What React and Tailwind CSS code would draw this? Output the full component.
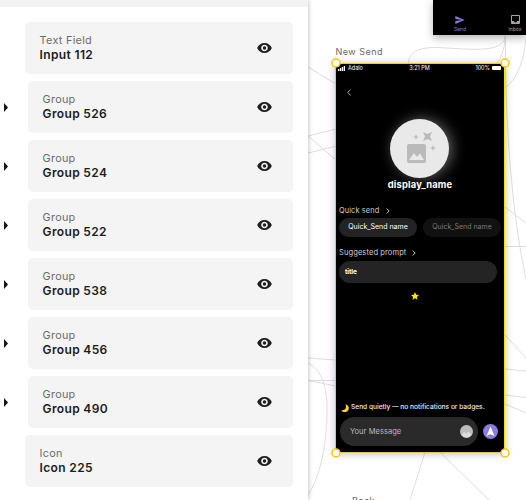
import React from "react";

const layers = [
  { kind: "Text Field", name: "Input 112" },
  { kind: "Group", name: "Group 526", group: true },
  { kind: "Group", name: "Group 524", group: true },
  { kind: "Group", name: "Group 522", group: true },
  { kind: "Group", name: "Group 538", group: true },
  { kind: "Group", name: "Group 456", group: true },
  { kind: "Group", name: "Group 490", group: true },
  { kind: "Icon", name: "Icon 225" },
];

function Eye() {
  return (
    <svg viewBox="1 4.5 22 15" className="h-[10px] w-[15px]" fill="#1f1f21">
      <path d="M12 4.5C7 4.5 2.73 7.61 1 12c1.73 4.39 6 7.5 11 7.5s9.27-3.11 11-7.5c-1.73-4.39-6-7.5-11-7.5zM12 17c-2.76 0-5-2.24-5-5s2.24-5 5-5 5 2.24 5 5-2.24 5-5 5zm0-7.6a2.6 2.6 0 1 0 0 5.2 2.6 2.6 0 0 0 0-5.2z" />
    </svg>
  );
}

function LayerRow({ layer }) {
  return (
    <div className="flex h-[52px] items-center">
      <div className={layer.group ? "w-[28px] pl-[4px]" : "w-[25px]"}>
        {layer.group && (
          <svg viewBox="0 0 4 9" className="h-[9px] w-[4px]" fill="#151515">
            <path d="M0 0L4 4.5L0 9z" />
          </svg>
        )}
      </div>
      <div className="flex h-full flex-1 items-center justify-between rounded-[5px] bg-[#f4f4f4] pr-[21px] pl-[15px]">
        <div className="-ml-[0.4px] flex flex-col whitespace-nowrap">
          <span className="text-[10.8px] leading-[14px] tracking-[0.3px] text-[#6b6b6b]">{layer.kind}</span>
          <span className="text-[12px] leading-[14px] font-semibold tracking-[0.35px] text-[#1c1c1e]">{layer.name}</span>
        </div>
        <Eye />
      </div>
    </div>
  );
}

function Connections() {
  return (
    <svg viewBox="0 0 526 500" className="absolute inset-0 h-[500px] w-[526px]" fill="none" stroke="#dedede" strokeWidth="1">
      <path d="M408.500 63C409 51 421 47 438 47.500C470 49 503 54 505.500 36V62C506 120 511 210 526 279" />
      <path d="M505 36C505 48 502 56 497 63M526 38C524 60 518 78 505 88" />
      <path d="M308 67L336 84M308 136L336 129M308 136L336 160M308 153L336 146" />
      <path d="M308 358L336 360M308 380.500H336M308 380.500L336 386M308 363C322 371 327 385 327 410C327 450 318 480 308 495" />
      <path d="M505 207L526 223M505 246.500H526M505 335L526 358M505 369L526 371M505 395L526 397.500M505 404L526 413" />
      <path d="M425 452L410 500M440 452L489 500" />
    </svg>
  );
}

function Chevron({ className }) {
  return (
    <svg viewBox="0 0 4 6" className={className} fill="none" stroke="#c9c9c9" strokeWidth="1">
      <path d="M.7.5L3.200 3L.7 5.500" />
    </svg>
  );
}

function Avatar() {
  return (
    <div className="mt-[23px] ml-[54px] h-[59px] w-[59px] rounded-full bg-[#e9e9e9] shadow-[3px_0_14px_rgba(255,255,255,0.38)]">
      <svg viewBox="0 0 59 59" className="h-full w-full" fill="#bababa">
        <rect x="17" y="25" width="19" height="19" rx="2" />
        <path d="M19 41L24 34L27 38L30 34.500L34 41z" fill="#e9e9e9" />
        <path d="M33 13L37.500 15L42 13L40 17.500L42 22L37.500 20L33 22L35 17.500z" />
        <path d="M26 15L26.800 17.200L29 18L26.800 18.800L26 21L25.200 18.800L23 18L25.200 17.200zM43 26L43.800 28.200L46 29L43.800 29.800L43 32L42.200 29.800L40 29L42.200 28.200z" />
      </svg>
    </div>
  );
}

function StatusBar() {
  return (
    <div className="flex h-[8px] items-center justify-between pr-[3px] pl-[2px] text-[5.5px] leading-[8px] text-white">
      <div className="flex w-[48px] items-center gap-[3px]">
        <svg viewBox="0 0 7 5" className="h-[5px] w-[7px]" fill="#fff">
          <path d="M0 3h1.300v2H0zM1.900 2h1.300v3H1.900zM3.800 1h1.300v4H3.800zM5.700 0H7v5H5.700z" />
        </svg>
        <span>Adalo</span>
      </div>
      <span>3:21 PM</span>
      <div className="flex w-[48px] items-center justify-end gap-[2px]">
        <span>100%</span>
        <span className="h-[4px] w-[9px] rounded-[1px] bg-white" />
      </div>
    </div>
  );
}

function Phone() {
  return (
    <div className="absolute top-[63px] left-[335px] flex h-[390px] w-[170px] flex-col border border-[#ffc515] border-r-[#ffdc00] bg-black whitespace-nowrap shadow-[0_1px_8px_rgba(0,0,0,0.25)]">
      <StatusBar />
      <svg viewBox="0 0 4 7" className="mt-[17px] ml-[11px] h-[7px] w-[4px]" fill="none" stroke="#bdbdbd" strokeWidth="0.9">
        <path d="M3.500.5L.7 3.500L3.500 6.500" />
      </svg>
      <Avatar />
      <div className="h-[13px] text-center text-[9.4px] leading-[13px] font-bold tracking-[0.170px] text-white">display_name</div>
      <div className="mt-[15px] ml-[3px] flex h-[10px] items-center gap-[7px]">
        <span className="text-[7.4px] tracking-[0.1px] text-[#cfcfcf]">Quick send</span>
        <Chevron className="h-[6px] w-[4px]" />
      </div>
      <div className="mt-[2px] ml-[3px] flex gap-[6px] text-[7px] leading-[18px]">
        <span className="h-[19px] w-[78px] rounded-full bg-[#232323] text-center text-white">Quick_Send name</span>
        <span className="h-[19px] w-[78px] rounded-full bg-[#111] text-center text-[#7b7b7b]">Quick_Send name</span>
      </div>
      <div className="mt-[11px] ml-[3px] flex h-[10px] items-center gap-[6px]">
        <span className="text-[7.5px] tracking-[0.110px] text-[#cfcfcf]">Suggested prompt</span>
        <Chevron className="h-[6px] w-[4px]" />
      </div>
      <div className="mt-[3px] ml-[3px] h-[22px] w-[158px] rounded-full bg-[#242424] pl-[6px] text-[6.6px] leading-[23px] font-bold tracking-[-0.100px] text-white">title</div>
      <svg viewBox="0 0 24 24" className="mt-[9px] ml-[75px] h-[8px] w-[8px]" fill="#ffe500">
        <path d="M12 0l3.600 8 8.400.9-6.300 5.800L19.500 23 12 18.800 4.500 23l1.800-8.300L0 8.900 8.400 8z" />
      </svg>
      <div className="mt-auto ml-[5px] flex h-[10px] items-center gap-[2px] text-[6.6px] font-medium text-[#ececec]">
        <svg viewBox="0 0 8 8" className="h-[8px] w-[8px]" fill="#ffd426">
          <path d="M4.300.2A4 4 0 1 1 .3 6.200C4 7 6.300 3.500 4.300.2z" />
        </svg>
        <span>Send quietly — no notifications or badges.</span>
      </div>
      <div className="mt-[4px] mb-[6px] ml-[4px] flex items-center gap-[5px]">
        <div className="flex h-[29px] w-[138px] items-center justify-between rounded-full bg-[#2a2a2a] pr-[5px] pl-[10px]">
          <span className="text-[7.5px] tracking-[0.050px] text-[#bdbdbd]">Your Message</span>
          <svg viewBox="0 0 13 13" className="h-[13px] w-[13px]">
            <circle cx="6.500" cy="6.500" r="6.500" fill="#bdbdbd" />
            <path d="M1.500 10L4.200 6.800L6.200 9L8.500 6.500L11.500 10Q6.500 15 1.500 10z" fill="#dedede" />
          </svg>
        </div>
        <svg viewBox="0 0 15 15" className="h-[15px] w-[15px]">
          <circle cx="7.500" cy="7.500" r="7.500" fill="#8f7be0" />
          <path d="M7.500 2.500L11.500 12L7.500 10.300L3.500 12z" fill="#fff" />
        </svg>
      </div>
    </div>
  );
}

function Handle({ className }) {
  return (
    <svg viewBox="0 0 10 10" className={"absolute h-[10px] w-[10px] " + className} fill="#fff" stroke="#ffc107" strokeWidth="1.500">
      <circle cx="5" cy="5" r="4" />
    </svg>
  );
}

export default function App() {
  return (
    <div className="relative h-[500px] w-[526px] overflow-hidden bg-white font-['Inter','Liberation_Sans',sans-serif]">
      <Connections />

      <div className="absolute top-0 left-[433px] flex h-[35px] w-[93px] items-end bg-black pb-[3px] text-[5px] leading-[6px] shadow-[0_3px_8px_rgba(0,0,0,0.3)]">
        <div className="flex w-[54px] shrink-0 flex-col items-center gap-[2px] text-[#8c79e0]">
          <svg viewBox="2 3 21 18" className="h-[8px] w-[10px]" fill="currentColor">
            <path d="M2.010 21L23 12 2.010 3 2 10l15 2-15 2z" />
          </svg>
          <span>Send</span>
        </div>
        <div className="ml-[21px] flex w-[14px] shrink-0 flex-col items-center gap-[2px] text-[#a5a5a5]">
          <svg viewBox="3 3 18 18" className="h-[9px] w-[9px]" fill="currentColor">
            <path d="M19 3H5a2 2 0 0 0-2 2v14a2 2 0 0 0 2 2h14a2 2 0 0 0 2-2V5a2 2 0 0 0-2-2zm0 12h-4c0 1.660-1.340 3-3 3s-3-1.340-3-3H5V5h14v10z" />
          </svg>
          <span>Inbox</span>
        </div>
      </div>

      <div className="absolute top-[46px] left-[335.5px] text-[9px] leading-[12px] tracking-[0.500px] whitespace-nowrap text-[#686868]">New Send</div>
      <div className="absolute top-[495px] left-[352px] text-[9px] leading-[12px] tracking-[0.500px] whitespace-nowrap text-[#686868]">Back</div>

      <Phone />
      <Handle className="top-[58px] left-[330.5px]" />
      <Handle className="top-[58px] left-[499.5px]" />
      <Handle className="top-[447.5px] left-[330.5px]" />
      <Handle className="top-[447.5px] left-[499.5px]" />

      <aside className="relative h-[500px] w-[308px] bg-white shadow-[1px_0_4px_rgba(0,0,0,0.22)]">
        <div className="h-[7px] bg-[#f3f3f3]" />
        <div className="mt-[15px] flex w-[293px] flex-col gap-[7px]">
          {layers.map((layer) => (
            <LayerRow key={layer.name} layer={layer} />
          ))}
        </div>
      </aside>
    </div>
  );
}
